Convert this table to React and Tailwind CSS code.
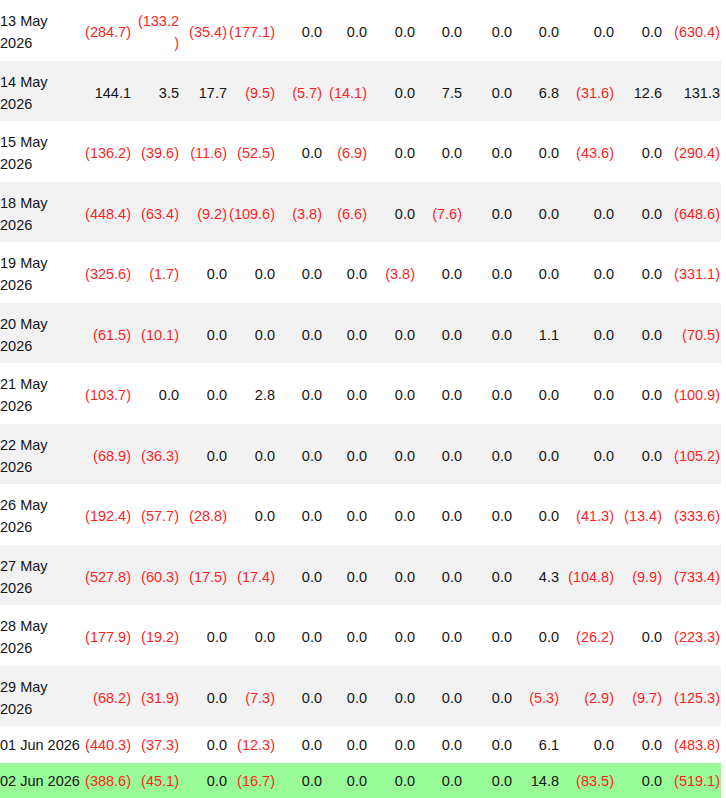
import React from "react";

const widths = [82, 49, 48, 48, 48, 47, 45, 48, 47, 50, 47, 55, 48, 59];

const rows = [
  ["13 May 2026", "(284.7)", "(133.2)", "(35.4)", "(177.1)", "0.0", "0.0", "0.0", "0.0", "0.0", "0.0", "0.0", "0.0", "(630.4)"],
  ["14 May 2026", "144.1", "3.5", "17.7", "(9.5)", "(5.7)", "(14.1)", "0.0", "7.5", "0.0", "6.8", "(31.6)", "12.6", "131.3"],
  ["15 May 2026", "(136.2)", "(39.6)", "(11.6)", "(52.5)", "0.0", "(6.9)", "0.0", "0.0", "0.0", "0.0", "(43.6)", "0.0", "(290.4)"],
  ["18 May 2026", "(448.4)", "(63.4)", "(9.2)", "(109.6)", "(3.8)", "(6.6)", "0.0", "(7.6)", "0.0", "0.0", "0.0", "0.0", "(648.6)"],
  ["19 May 2026", "(325.6)", "(1.7)", "0.0", "0.0", "0.0", "0.0", "(3.8)", "0.0", "0.0", "0.0", "0.0", "0.0", "(331.1)"],
  ["20 May 2026", "(61.5)", "(10.1)", "0.0", "0.0", "0.0", "0.0", "0.0", "0.0", "0.0", "1.1", "0.0", "0.0", "(70.5)"],
  ["21 May 2026", "(103.7)", "0.0", "0.0", "2.8", "0.0", "0.0", "0.0", "0.0", "0.0", "0.0", "0.0", "0.0", "(100.9)"],
  ["22 May 2026", "(68.9)", "(36.3)", "0.0", "0.0", "0.0", "0.0", "0.0", "0.0", "0.0", "0.0", "0.0", "0.0", "(105.2)"],
  ["26 May 2026", "(192.4)", "(57.7)", "(28.8)", "0.0", "0.0", "0.0", "0.0", "0.0", "0.0", "0.0", "(41.3)", "(13.4)", "(333.6)"],
  ["27 May 2026", "(527.8)", "(60.3)", "(17.5)", "(17.4)", "0.0", "0.0", "0.0", "0.0", "0.0", "4.3", "(104.8)", "(9.9)", "(733.4)"],
  ["28 May 2026", "(177.9)", "(19.2)", "0.0", "0.0", "0.0", "0.0", "0.0", "0.0", "0.0", "0.0", "(26.2)", "0.0", "(223.3)"],
  ["29 May 2026", "(68.2)", "(31.9)", "0.0", "(7.3)", "0.0", "0.0", "0.0", "0.0", "0.0", "(5.3)", "(2.9)", "(9.7)", "(125.3)"],
  ["01 Jun 2026", "(440.3)", "(37.3)", "0.0", "(12.3)", "0.0", "0.0", "0.0", "0.0", "0.0", "6.1", "0.0", "0.0", "(483.8)"],
  ["02 Jun 2026", "(388.6)", "(45.1)", "0.0", "(16.7)", "0.0", "0.0", "0.0", "0.0", "0.0", "14.8", "(83.5)", "0.0", "(519.1)"],
];

function Cell({ v, last, single }) {
  const neg = v.startsWith("(");
  // the original wraps this one value onto two lines
  const content = v === "(133.2)" ? (<>(133.2<br />)</>) : v;
  return (
    <td className={`text-right align-middle whitespace-nowrap pl-0 pb-0 ${single ? "pt-0" : "pt-[4px]"} ${last ? "pr-[1px]" : "pr-0"} ${neg ? "text-[#ff1f1f]" : "text-[#141414]"}`}>
      {content}
    </td>
  );
}

export default function App() {
  return (
    <div className="w-[726px] h-[798px] overflow-hidden bg-white">
      <table
        className="table-fixed border-collapse w-[721px] text-[14.5px] leading-[22px]"
        style={{ fontFamily: '"Liberation Sans", Arial, sans-serif' }}
      >
        <colgroup>
          {widths.map((w, i) => <col key={i} style={{ width: w }} />)}
        </colgroup>
        <tbody>
          {rows.map((r, i) => {
            const last = i === rows.length - 1;
            const single = i >= 12;
            const bg = last ? "bg-[#98fb98]" : i % 2 === 1 ? "bg-[#f2f2f2]" : "bg-white";
            const [day, mon, year] = r[0].split(" ");
            return (
              <tr key={r[0]} className={`${bg} ${single ? (last ? "h-[36px]" : "h-[37px]") : "h-[60.5px]"}`}>
                <td className={`text-left align-middle whitespace-nowrap px-0 pb-0 ${single ? "pt-0" : "pt-[4px]"} text-[#141414]`}>
                  {single ? r[0] : (<>{day} {mon}<br />{year}</>)}
                </td>
                {r.slice(1).map((v, j) => <Cell key={j} v={v} single={single} last={j === r.length - 2} />)}
              </tr>
            );
          })}
        </tbody>
      </table>
    </div>
  );
}
